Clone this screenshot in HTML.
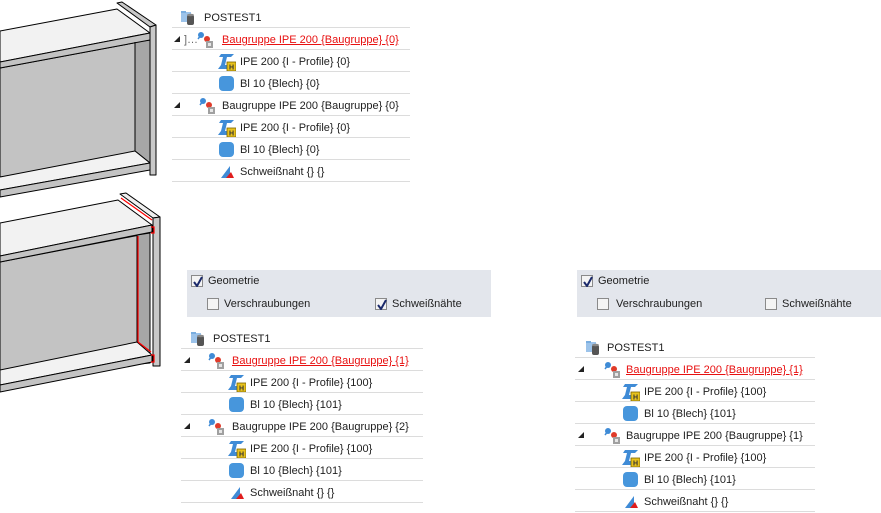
<!DOCTYPE html>
<html><head><meta charset="utf-8"><style>
*{margin:0;padding:0;box-sizing:border-box}
body{width:881px;height:513px;background:#fff;position:relative;overflow:hidden;font-family:"Liberation Sans",sans-serif;font-size:11px;color:#1e1e1e}
.tree{position:absolute}
.row{position:relative;height:22px;border-bottom:1px solid #dcdcdc}
.t{position:absolute;top:6px;white-space:nowrap;line-height:12px}
.red{color:#e81010;text-decoration:underline}
.ic{position:absolute;top:3px}
.tri{position:absolute;top:8px;width:0;height:0;border-left:6px solid transparent;border-bottom:6px solid #222}
.panel{position:absolute;background:#e3e6ec;height:47px}
.cb{position:absolute;width:12px;height:12px;border:1px solid #8a8a8a;background:#f4f4f4}
.cb svg{position:absolute;left:1px;top:0}
.lbl{position:absolute;white-space:nowrap}
</style></head><body>

<svg width="170" height="410" style="position:absolute;left:0;top:0" viewBox="0 0 170 410">
 <g stroke="#000" stroke-width="1" stroke-linejoin="round">
  <polygon points="0,68 150,40 150,163 0,177" fill="#c3c3c3"/>
  <polygon points="135,42 150,40 150,163 135,151" fill="#a7a7a7"/>
  <polygon points="0,31 117,9 150,33 0,62" fill="#f2f2f2"/>
  <polygon points="0,62 150,33 150,40 0,68" fill="#c3c3c3"/>
  <polygon points="0,177 135,151 150,163 0,190" fill="#f2f2f2" stroke="none"/>
  <line x1="0" y1="177" x2="135" y2="151"/>
  <line x1="135" y1="151" x2="150" y2="163"/>
  <line x1="0" y1="190" x2="150" y2="163"/>
  <polygon points="0,190 150,163 150,170 0,197" fill="#c3c3c3"/>
  <line x1="135" y1="42" x2="135" y2="151"/>
  <polygon points="117,3 122,2 156,25 150,27" fill="#c8c8c8"/>
  <polygon points="150,27 156,25 156,175 150,175" fill="#c8c8c8"/>
  <polygon points="0,262 150,233 150,363 0,378" fill="#c3c3c3"/>
  <polygon points="137,235 150,233 150,360 137,342" fill="#a7a7a7"/>
  <polygon points="0,223 118,200 152,225 0,256" fill="#f2f2f2"/>
  <polygon points="0,256 152,225 152,232 0,262" fill="#c3c3c3"/>
  <polygon points="0,370 137,342 152,355 0,385" fill="#f2f2f2"/>
  <polygon points="0,385 152,355 152,362 0,392" fill="#c3c3c3"/>
  <polygon points="120,194 126,193 160,217 153,218" fill="#f0f0f0"/>
  <polygon points="153,218 160,217 160,366 153,366" fill="#c8c8c8"/>
 </g>
 <g stroke="#f00" stroke-width="1.2" fill="none">
  <line x1="121" y1="198" x2="152" y2="220"/>
  <line x1="138" y1="236" x2="138" y2="342"/>
  <line x1="138" y1="342" x2="151" y2="352"/>
  <polyline points="151,227 154,227 154,233 151,233"/>
  <polyline points="151,355 154,355 154,362 151,362"/>
 </g>
</svg>

<svg width="0" height="0" style="position:absolute">
 <defs>
  <g id="root"><rect x="1" y="3" width="10" height="10" fill="#9cc3ea"/><rect x="1" y="2" width="5" height="2" fill="#7aaee0"/><rect x="7" y="6" width="7" height="10" rx="2" fill="#555"/><ellipse cx="10.5" cy="6" rx="3.5" ry="1.3" fill="#888"/></g>
  <g id="asm"><circle cx="5" cy="4" r="3" fill="#3f8bd6"/><line x1="2" y1="8" x2="5" y2="4" stroke="#3f8bd6" stroke-width="1.5"/><circle cx="11" cy="8" r="3" fill="#e03b2a"/><rect x="10" y="10" width="7" height="7" fill="#a0a0a0"/><rect x="12" y="12" width="3" height="3" fill="#e6e6e6"/></g>
  <g id="prof"><polygon points="3,1 16,1 13,4 9,4 7,12 11,12 9,16 0,16 3,12 5,4 1,4" fill="#3f8bd6"/><rect x="9" y="9" width="9" height="9" fill="#e8c21c" stroke="#7a6400" stroke-width=".8"/><text x="11" y="16.5" font-size="7" font-weight="bold" fill="#333" font-family="Liberation Sans">H</text></g>
  <g id="plate"><rect x="1" y="1" width="15" height="15" rx="4" fill="#4796dc"/></g>
  <g id="weld"><polygon points="3,15 12,3 12,15" fill="#3f8bd6"/><polygon points="8,15 13,9 16,15" fill="#e01d1d"/></g>
 </defs>
</svg>

<div class="tree" style="left:172px;top:6px;width:238px">
 <div class="row"><svg class="ic" style="left:8px" width="18" height="18"><use href="#root"/></svg><span class="t" style="left:32px">POSTEST1</span></div>
 <div class="row"><span class="tri" style="left:2px"></span><span class="t" style="left:12px;color:#666">]…</span><svg class="ic" style="left:24px" width="18" height="18"><use href="#asm"/></svg><span class="t red" style="left:50px">Baugruppe IPE 200 {Baugruppe} {0}</span></div>
 <div class="row"><svg class="ic" style="left:46px" width="18" height="18"><use href="#prof"/></svg><span class="t" style="left:68px">IPE 200 {I - Profile} {0}</span></div>
 <div class="row"><svg class="ic" style="left:46px" width="18" height="18"><use href="#plate"/></svg><span class="t" style="left:68px">Bl 10 {Blech} {0}</span></div>
 <div class="row"><span class="tri" style="left:2px"></span><svg class="ic" style="left:26px" width="18" height="18"><use href="#asm"/></svg><span class="t" style="left:50px">Baugruppe IPE 200 {Baugruppe} {0}</span></div>
 <div class="row"><svg class="ic" style="left:46px" width="18" height="18"><use href="#prof"/></svg><span class="t" style="left:68px">IPE 200 {I - Profile} {0}</span></div>
 <div class="row"><svg class="ic" style="left:46px" width="18" height="18"><use href="#plate"/></svg><span class="t" style="left:68px">Bl 10 {Blech} {0}</span></div>
 <div class="row"><svg class="ic" style="left:46px" width="18" height="18"><use href="#weld"/></svg><span class="t" style="left:68px">Schweißnaht {} {}</span></div>
</div>

<div class="panel" style="left:187px;top:270px;width:304px">
 <div class="cb" style="left:4px;top:5px"><svg width="10" height="11"><path d="M1,6 L4,10 L9,1" stroke="#1b2a6b" stroke-width="2" fill="none"/></svg></div>
 <span class="lbl" style="left:21px;top:5px">Geometrie</span>
 <div class="cb" style="left:20px;top:28px"></div>
 <span class="lbl" style="left:37px;top:28px">Verschraubungen</span>
 <div class="cb" style="left:188px;top:28px"><svg width="10" height="11"><path d="M1,6 L4,10 L9,1" stroke="#1b2a6b" stroke-width="2" fill="none"/></svg></div>
 <span class="lbl" style="left:205px;top:28px">Schweißnähte</span>
</div>

<div class="tree" style="left:181px;top:327px;width:242px">
 <div class="row"><svg class="ic" style="left:9px" width="18" height="18"><use href="#root"/></svg><span class="t" style="left:32px">POSTEST1</span></div>
 <div class="row"><span class="tri" style="left:3px"></span><svg class="ic" style="left:26px" width="18" height="18"><use href="#asm"/></svg><span class="t red" style="left:51px">Baugruppe IPE 200 {Baugruppe} {1}</span></div>
 <div class="row"><svg class="ic" style="left:47px" width="18" height="18"><use href="#prof"/></svg><span class="t" style="left:69px">IPE 200 {I - Profile} {100}</span></div>
 <div class="row"><svg class="ic" style="left:47px" width="18" height="18"><use href="#plate"/></svg><span class="t" style="left:69px">Bl 10 {Blech} {101}</span></div>
 <div class="row"><span class="tri" style="left:3px"></span><svg class="ic" style="left:26px" width="18" height="18"><use href="#asm"/></svg><span class="t" style="left:51px">Baugruppe IPE 200 {Baugruppe} {2}</span></div>
 <div class="row"><svg class="ic" style="left:47px" width="18" height="18"><use href="#prof"/></svg><span class="t" style="left:69px">IPE 200 {I - Profile} {100}</span></div>
 <div class="row"><svg class="ic" style="left:47px" width="18" height="18"><use href="#plate"/></svg><span class="t" style="left:69px">Bl 10 {Blech} {101}</span></div>
 <div class="row"><svg class="ic" style="left:47px" width="18" height="18"><use href="#weld"/></svg><span class="t" style="left:69px">Schweißnaht {} {}</span></div>
</div>

<div class="panel" style="left:577px;top:270px;width:304px">
 <div class="cb" style="left:4px;top:5px"><svg width="10" height="11"><path d="M1,6 L4,10 L9,1" stroke="#1b2a6b" stroke-width="2" fill="none"/></svg></div>
 <span class="lbl" style="left:21px;top:5px">Geometrie</span>
 <div class="cb" style="left:20px;top:28px"></div>
 <span class="lbl" style="left:39px;top:28px">Verschraubungen</span>
 <div class="cb" style="left:188px;top:28px"></div>
 <span class="lbl" style="left:205px;top:28px">Schweißnähte</span>
</div>

<div class="tree" style="left:575px;top:336px;width:240px">
 <div class="row"><svg class="ic" style="left:10px" width="18" height="18"><use href="#root"/></svg><span class="t" style="left:32px">POSTEST1</span></div>
 <div class="row"><span class="tri" style="left:3px"></span><svg class="ic" style="left:28px" width="18" height="18"><use href="#asm"/></svg><span class="t red" style="left:51px">Baugruppe IPE 200 {Baugruppe} {1}</span></div>
 <div class="row"><svg class="ic" style="left:47px" width="18" height="18"><use href="#prof"/></svg><span class="t" style="left:69px">IPE 200 {I - Profile} {100}</span></div>
 <div class="row"><svg class="ic" style="left:47px" width="18" height="18"><use href="#plate"/></svg><span class="t" style="left:69px">Bl 10 {Blech} {101}</span></div>
 <div class="row"><span class="tri" style="left:3px"></span><svg class="ic" style="left:28px" width="18" height="18"><use href="#asm"/></svg><span class="t" style="left:51px">Baugruppe IPE 200 {Baugruppe} {1}</span></div>
 <div class="row"><svg class="ic" style="left:47px" width="18" height="18"><use href="#prof"/></svg><span class="t" style="left:69px">IPE 200 {I - Profile} {100}</span></div>
 <div class="row"><svg class="ic" style="left:47px" width="18" height="18"><use href="#plate"/></svg><span class="t" style="left:69px">Bl 10 {Blech} {101}</span></div>
 <div class="row"><svg class="ic" style="left:47px" width="18" height="18"><use href="#weld"/></svg><span class="t" style="left:69px">Schweißnaht {} {}</span></div>
</div>

</body></html>
